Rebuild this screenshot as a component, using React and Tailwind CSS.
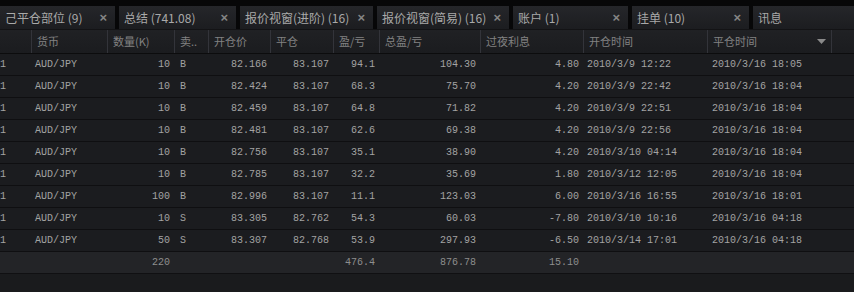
import React from "react";

const tabs = [
    { label: "己平仓部位 (9)", w: "w-[115px]", close: true },
    { label: "总结 (741.08)", w: "w-[117px]", close: true },
    { label: "报价视窗(进阶) (16)", w: "w-[133px]", close: true },
    { label: "报价视窗(简易) (16)", w: "w-[132px]", close: true },
    { label: "账户 (1)", w: "w-[115px]", close: true },
    { label: "挂单 (10)", w: "w-[117px]", close: true },
    { label: "讯息", w: "flex-1", close: false }
];

const headers = ["", "货币", "数量(K)", "卖..", "开仓价", "平仓", "盈/亏", "总盈/亏", "过夜利息", "开仓时间", "平仓时间", ""];

const rows = [
    ["10", "B", "82.166", "83.107", "94.1", "104.30", "4.80", "2010/3/9 12:22", "2010/3/16 18:05"],
    ["10", "B", "82.424", "83.107", "68.3", "75.70", "4.20", "2010/3/9 22:42", "2010/3/16 18:04"],
    ["10", "B", "82.459", "83.107", "64.8", "71.82", "4.20", "2010/3/9 22:51", "2010/3/16 18:04"],
    ["10", "B", "82.481", "83.107", "62.6", "69.38", "4.20", "2010/3/9 22:56", "2010/3/16 18:04"],
    ["10", "B", "82.756", "83.107", "35.1", "38.90", "4.20", "2010/3/10 04:14", "2010/3/16 18:04"],
    ["10", "B", "82.785", "83.107", "32.2", "35.69", "1.80", "2010/3/12 12:05", "2010/3/16 18:04"],
    ["100", "B", "82.996", "83.107", "11.1", "123.03", "6.00", "2010/3/16 16:55", "2010/3/16 18:01"],
    ["10", "S", "83.305", "82.762", "54.3", "60.03", "-7.80", "2010/3/10 10:16", "2010/3/16 04:18"],
    ["50", "S", "83.307", "82.768", "53.9", "297.93", "-6.50", "2010/3/14 17:01", "2010/3/16 04:18"]
];

const grid = "grid grid-cols-[31px_76px_67px_34px_62px_63px_46px_101px_103px_124px_124px_23px]";
const cjk = "font-['Noto_Sans_CJK_SC',sans-serif]";
const mono = "font-['Liberation_Mono','Noto_Sans_CJK_SC',monospace]";

const App = () => {
    return (
        <div className="w-[854px] h-[292px] bg-[#0a0a0b] overflow-hidden flex flex-col">

            {/* Tab strip */}
            <div className="flex gap-[4px] pt-[6px] bg-[#070708]">
                {tabs.map((tab, index) => (
                    <div
                        key={index}
                        className={`${tab.w} h-[23px] flex items-center justify-between pl-[5px] pr-[8px] bg-gradient-to-b from-[#25262a] to-[#1c1d20] text-[#a9a9a9] text-[12px] ${cjk}`}
                    >
                        <span className="whitespace-nowrap">{tab.label}</span>
                        {tab.close && <span className="text-[#858585] text-[13px] font-['Liberation_Sans',sans-serif] font-bold">×</span>}
                    </div>
                ))}
            </div>

            {/* Column headers */}
            <div className={`${grid} h-[25px] border-t border-[#131315] border-b border-b-[#0c0c0d] bg-gradient-to-b from-[#202124] to-[#1b1c1f]`}>
                {headers.map((h, index) => (
                    <div
                        key={index}
                        className={`flex items-center pl-[5px] text-[11px] text-[#828282] ${cjk} ${index > 0 ? "border-l border-[#33343a]" : ""} ${index === 10 ? "justify-between pr-[5px]" : ""}`}
                    >
                        <span className="whitespace-nowrap">{h}</span>
                        {index === 10 && (
                            <svg width="9" height="5" viewBox="0 0 9 5">
                                <path d="M0 0 L9 0 L4.5 5 Z" fill="#8a8a8a" />
                            </svg>
                        )}
                    </div>
                ))}
            </div>

            {/* Data rows */}
            <div className={`flex flex-col text-[10px] text-[#a3a3a3] ${mono}`}>
                {rows.map((r, index) => (
                    <div key={index} className={`${grid} h-[22px] items-center bg-[#1b1c1f] border-b border-[#0f0f11]`}>
                        <span>1</span>
                        <span className="pl-[4px]">AUD/JPY</span>
                        <span className="text-right pr-[4px]">{r[0]}</span>
                        <span className="pl-[6px]">{r[1]}</span>
                        <span className="text-right pr-[3px]">{r[2]}</span>
                        <span className="text-right pr-[4px]">{r[3]}</span>
                        <span className="text-right pr-[4px]">{r[4]}</span>
                        <span className="text-right pr-[4px]">{r[5]}</span>
                        <span className="text-right pr-[4px]">{r[6]}</span>
                        <span className="pl-[4px]">{r[7]}</span>
                        <span className="pl-[5px]">{r[8]}</span>
                        <span></span>
                    </div>
                ))}

                {/* Totals */}
                <div className={`${grid} h-[22px] items-center bg-[#232427] border-b border-[#101012] text-[#8e8e8e]`}>
                    <span></span>
                    <span></span>
                    <span className="text-right pr-[4px]">220</span>
                    <span></span>
                    <span></span>
                    <span></span>
                    <span className="text-right pr-[4px]">476.4</span>
                    <span className="text-right pr-[4px]">876.78</span>
                    <span className="text-right pr-[4px]">15.10</span>
                    <span></span>
                    <span></span>
                    <span></span>
                </div>
            </div>

            <div className="flex-1 bg-[#1a1b1d]"></div>
        </div>
    );
};

export default App;
